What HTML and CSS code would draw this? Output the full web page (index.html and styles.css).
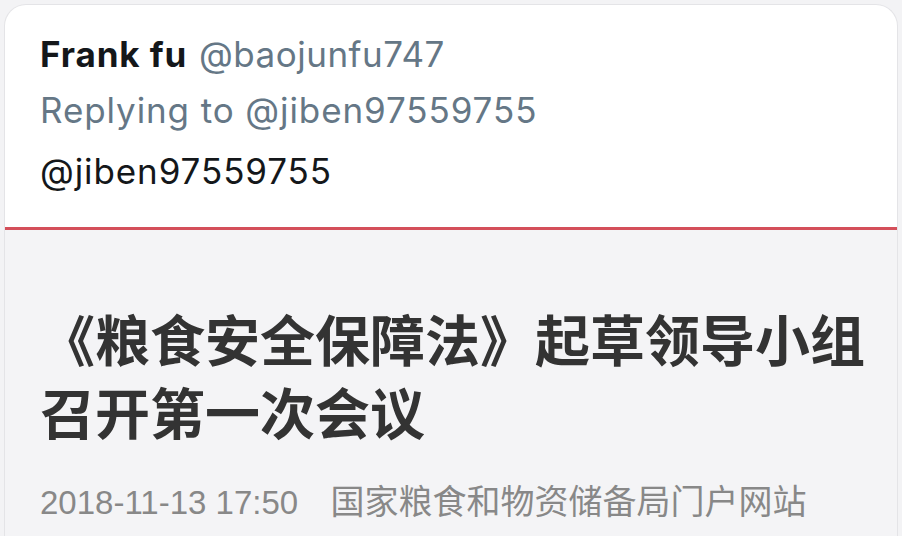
FILE: index.html
```html
<!DOCTYPE html>
<html lang="en">

<head>
    <meta charset="UTF-8">
    <meta name="viewport" content="width=device-width, initial-scale=1.0">
    <title>Frank fu reply</title>
    <link rel="stylesheet" href="styles.css">
</head>

<body>
    <div class="card">
        <div class="tweet">
            <div class="author">
                <span class="name">Frank fu</span>
                <span class="handle">@baojunfu747</span>
            </div>
            <div class="replying">Replying to @jiben97559755</div>
            <div class="mention">@jiben97559755</div>
        </div>

        <div class="article">
            <h1 class="headline">《粮食安全保障法》起草领导小组<br>召开第一次会议</h1>
            <div class="meta">
                <span class="date">2018-11-13 17:50</span>
                <span class="source">国家粮食和物资储备局门户网站</span>
            </div>
        </div>
    </div>
</body>

</html>
```

FILE: styles.css
```css
body {
    margin: 0;
    background-color: #f3f3f5;
    font-family: Inter, "Noto Sans CJK SC", sans-serif;
    height: 536px;
    overflow: hidden;
}

.card {
    margin: 4px 4px 0 4px;
    border: 1px solid #e4e4e7;
    border-bottom: none;
    border-radius: 22px 22px 0 0;
    background-color: #fff;
    overflow: hidden;
    height: 531px;
}

.tweet {
    padding: 21px 35px 0 35px;
    height: 201px;
    font-size: 35px;
    letter-spacing: 0.9px;
}

.author,
.replying,
.mention {
    line-height: 56px;
    white-space: nowrap;
}

.name {
    font-weight: 700;
    color: #14171a;
    margin-right: 1px;
}

.handle {
    color: #657786;
    letter-spacing: 0.5px;
}

.replying {
    color: #657786;
}

.mention {
    margin-top: 5px;
    color: #14171a;
}

.article {
    border-top: 3px solid #d44f5a;
    background-color: #f4f4f6;
    padding: 71px 35px 0 35px;
    height: 100%;
}

.headline {
    margin: 0;
    font-family: "Noto Sans CJK SC", sans-serif;
    font-weight: 700;
    font-size: 55px;
    line-height: 73px;
    color: #333;
    white-space: nowrap;
}

.meta {
    margin-top: 33px;
    line-height: 40px;
    color: #888;
    white-space: nowrap;
}

.date {
    font-family: "Liberation Sans", sans-serif;
    font-size: 33px;
    margin-right: 28px;
}

.source {
    font-family: "Noto Sans CJK SC", sans-serif;
    font-size: 34px;
}
```
